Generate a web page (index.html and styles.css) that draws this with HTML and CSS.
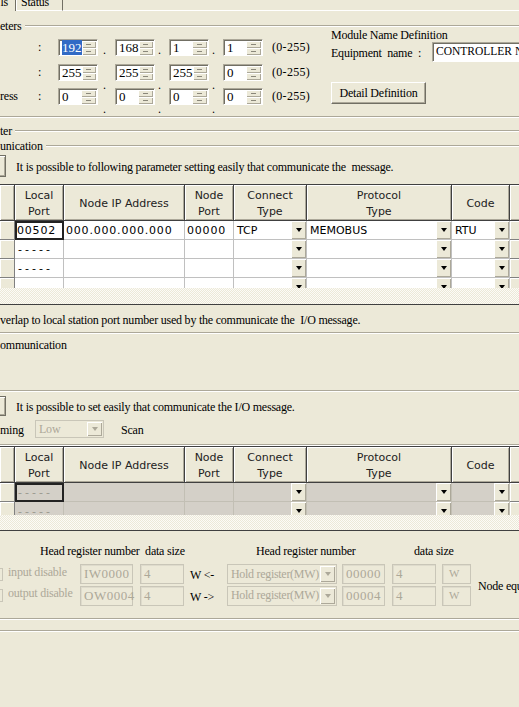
FILE: index.html
```html
<!DOCTYPE html>
<html lang="en">
<head>
    <meta charset="UTF-8">
    <meta name="viewport" content="width=device-width, initial-scale=1.0">
    <title>Ethernet Transmission Definition</title>
    <link rel="stylesheet" href="styles.css">
</head>
<body>
<div class="dialog">
    <div class="tabs">
        <div class="tab tab-current"><span>ls</span></div>
        <div class="tab tab-status"><span>Status</span></div>
        <div class="tab-rest"></div>
    </div>

    <div class="group-title"><span>eters</span><div class="etch"></div></div>
    <div class="param-group">
        <div class="ip-block">
            <div class="ip-row">
                <span class="ip-label"></span><span class="colon">:</span>
                <div class="spin"><span class="spin-value"><span class="selected">192</span></span><div class="spin-btns"><i class="up"></i><i class="down"></i></div></div>
                <span class="dot dot-mid dot-first">.</span>
                <div class="spin"><span class="spin-value">168</span><div class="spin-btns"><i class="up"></i><i class="down"></i></div></div>
                <span class="dot dot-mid">.</span>
                <div class="spin"><span class="spin-value">1</span><div class="spin-btns"><i class="up"></i><i class="down"></i></div></div>
                <span class="dot dot-mid">.</span>
                <div class="spin"><span class="spin-value">1</span><div class="spin-btns"><i class="up"></i><i class="down"></i></div></div>
                <span class="range">(0-255)</span>
            </div>
            <div class="ip-row row-mask">
                <span class="ip-label"></span><span class="colon">:</span>
                <div class="spin"><span class="spin-value">255</span><div class="spin-btns"><i class="up"></i><i class="down"></i></div></div>
                <span class="dot dot-first">.</span>
                <div class="spin"><span class="spin-value">255</span><div class="spin-btns"><i class="up"></i><i class="down"></i></div></div>
                <span class="dot">.</span>
                <div class="spin"><span class="spin-value">255</span><div class="spin-btns"><i class="up"></i><i class="down"></i></div></div>
                <span class="dot">.</span>
                <div class="spin"><span class="spin-value">0</span><div class="spin-btns"><i class="up"></i><i class="down"></i></div></div>
                <span class="range">(0-255)</span>
            </div>
            <div class="ip-row row-gateway">
                <span class="ip-label">ress</span><span class="colon">:</span>
                <div class="spin"><span class="spin-value">0</span><div class="spin-btns"><i class="up"></i><i class="down"></i></div></div>
                <span class="dot dot-first">.</span>
                <div class="spin"><span class="spin-value">0</span><div class="spin-btns"><i class="up"></i><i class="down"></i></div></div>
                <span class="dot">.</span>
                <div class="spin"><span class="spin-value">0</span><div class="spin-btns"><i class="up"></i><i class="down"></i></div></div>
                <span class="dot">.</span>
                <div class="spin"><span class="spin-value">0</span><div class="spin-btns"><i class="up"></i><i class="down"></i></div></div>
                <span class="range">(0-255)</span>
            </div>
        </div>
        <div class="module-block">
            <div class="module-title">Module Name Definition</div>
            <div class="equip-row"><span class="equip-label">Equipment&nbsp; name&nbsp; :</span><div class="text-box">CONTROLLER NAME</div></div>
            <button class="push-btn">Detail Definition</button>
        </div>
    </div>
    <div class="etch etch-line group-end"></div>

    <div class="section-title title-ter"><span>ter</span><div class="etch"></div></div>
    <div class="section-title title-comm"><span>unication</span><div class="etch"></div></div>
    <div class="easy-row easy-msg">
        <div class="stub-btn"></div>
        <span>It is possible to following parameter setting easily that communicate the&nbsp; message.</span>
    </div>

    <div class="grid-wrap grid-msg">
        <table class="grid">
            <colgroup><col class="c-row"><col class="c-local"><col class="c-ip"><col class="c-port"><col class="c-conn"><col class="c-proto"><col class="c-code"><col class="c-more"></colgroup>
            <thead>
                <tr><th></th><th>Local<br>Port</th><th>Node IP Address</th><th>Node<br>Port</th><th>Connect<br>Type</th><th>Protocol<br>Type</th><th>Code</th><th></th></tr>
            </thead>
            <tbody>
                <tr><td class="rh"></td><td class="num focus">00502</td><td class="num">000.000.000.000</td><td class="num">00000</td><td><div class="combo"><span>TCP</span><i class="drop"></i></div></td><td><div class="combo"><span>MEMOBUS</span><i class="drop"></i></div></td><td><div class="combo"><span>RTU</span><i class="drop"></i></div></td><td class="rh"></td></tr>
                <tr><td class="rh"></td><td class="dash">-----</td><td></td><td></td><td><div class="combo"><span></span><i class="drop"></i></div></td><td><div class="combo"><span></span><i class="drop"></i></div></td><td><div class="combo"><span></span><i class="drop"></i></div></td><td class="rh"></td></tr>
                <tr><td class="rh"></td><td class="dash">-----</td><td></td><td></td><td><div class="combo"><span></span><i class="drop"></i></div></td><td><div class="combo"><span></span><i class="drop"></i></div></td><td><div class="combo"><span></span><i class="drop"></i></div></td><td class="rh"></td></tr>
                <tr><td class="rh"></td><td class="dash">-----</td><td></td><td></td><td><div class="combo"><span></span><i class="drop"></i></div></td><td><div class="combo"><span></span><i class="drop"></i></div></td><td><div class="combo"><span></span><i class="drop"></i></div></td><td class="rh"></td></tr>
            </tbody>
        </table>
    </div>
    <div class="dither"></div>

    <div class="note">verlap to local station port number used by the communicate the&nbsp; I/O message.</div>
    <div class="etch etch-line note-end"></div>
    <div class="plain-title">ommunication</div>
    <div class="etch etch-line io-start"></div>
    <div class="easy-row easy-io">
        <div class="stub-btn"></div>
        <span>It is possible to set easily that communicate the I/O message.</span>
    </div>
    <div class="timing-row">
        <span class="timing-label">ming</span>
        <div class="combo-box disabled"><span>Low</span><i class="drop"></i></div>
        <span class="scan">Scan</span>
    </div>
    <div class="etch etch-line io-grid-start"></div>

    <div class="grid-wrap grid-io">
        <table class="grid grid-disabled">
            <colgroup><col class="c-row"><col class="c-local"><col class="c-ip"><col class="c-port"><col class="c-conn"><col class="c-proto"><col class="c-code"><col class="c-more"></colgroup>
            <thead>
                <tr><th></th><th>Local<br>Port</th><th>Node IP Address</th><th>Node<br>Port</th><th>Connect<br>Type</th><th>Protocol<br>Type</th><th>Code</th><th></th></tr>
            </thead>
            <tbody>
                <tr><td class="rh"></td><td class="dash focus">-----</td><td></td><td></td><td><div class="combo"><span></span><i class="drop"></i></div></td><td><div class="combo"><span></span><i class="drop"></i></div></td><td><div class="combo"><span></span><i class="drop"></i></div></td><td class="rh"></td></tr>
                <tr><td class="rh"></td><td class="dash">-----</td><td></td><td></td><td><div class="combo"><span></span><i class="drop"></i></div></td><td><div class="combo"><span></span><i class="drop"></i></div></td><td><div class="combo"><span></span><i class="drop"></i></div></td><td class="rh"></td></tr>
            </tbody>
        </table>
    </div>
    <div class="dither dither-io"></div>

    <div class="reg-heads">
        <span class="head-local">Head register number&nbsp; data size</span>
        <span class="head-node">Head register number</span>
        <span class="head-size">data size</span>
    </div>
    <div class="reg-grid">
        <div class="chk"></div>
        <span class="reg-label">input disable</span>
        <div class="field f-reg">IW0000</div>
        <div class="field f-size">4</div>
        <span class="dir">W &lt;-</span>
        <div class="combo-box disabled f-combo"><span>Hold register(MW)</span><i class="drop"></i></div>
        <div class="field f-node">00000</div>
        <div class="field f-size">4</div>
        <div class="field f-unit">W</div>
        <span class="node-equ">Node equ</span>

        <div class="chk"></div>
        <span class="reg-label">output disable</span>
        <div class="field f-reg">OW0004</div>
        <div class="field f-size">4</div>
        <span class="dir">W -&gt;</span>
        <div class="combo-box disabled f-combo"><span>Hold register(MW)</span><i class="drop"></i></div>
        <div class="field f-node">00004</div>
        <div class="field f-size">4</div>
        <div class="field f-unit">W</div>
    </div>
    <div class="etch etch-line reg-end"></div>
    <div class="etch etch-line last-line"></div>
</div>
</body>
</html>
```

FILE: styles.css
```css
body, html {
    margin: 0;
    padding: 0;
    background-color: #ECE9D8;
    font-family: 'Liberation Serif', serif;
    font-size: 12px;
    letter-spacing: -0.22px;
    color: #000;
}

.dialog {
    width: 519px;
    height: 707px;
    overflow: hidden;
}

/* tabs */
.tabs {
    display: flex;
    height: 11px;
}

.tab {
    height: 11px;
    box-sizing: border-box;
    line-height: 4px;
    font-size: 12px;
    overflow: hidden;
}

.tab-current {
    width: 16px;
    text-align: right;
    padding-right: 7px;
    border-right: 1px solid #716F64;
}

.tab-status {
    width: 47px;
    padding-left: 4px;
    border-left: 1px solid #fff;
    border-right: 1px solid #716F64;
    border-bottom: 1px solid #fff;
}

.tab-rest {
    flex: 1;
    border-bottom: 1px solid #fff;
}

/* etched lines */
.etch {
    flex: 1;
    height: 0;
    border-top: 1px solid #ACA899;
    border-bottom: 1px solid #fff;
}

.etch-line {
    flex: none;
}

.group-title, .section-title {
    display: flex;
    align-items: center;
    height: 12px;
    line-height: 12px;
}

.group-title {
    margin-top: 9px;
}

.group-title span, .section-title span {
    margin-right: 3px;
}

/* IP parameters */
.param-group {
    display: flex;
    margin-top: -3px;
}

.ip-block {
    flex: none;
    width: 331px;
    padding-top: 10px;
}

.ip-row {
    display: flex;
    align-items: center;
    height: 17px;
    white-space: nowrap;
}

.row-mask {
    margin-top: 8px;
}

.row-gateway {
    margin-top: 7px;
}

.ip-label {
    width: 38px;
}

.colon {
    width: 20px;
}

.spin {
    flex: none;
    display: flex;
    width: 40px;
    height: 17px;
    box-sizing: border-box;
    border: 1px solid;
    border-color: #ACA899 #fff #fff #ACA899;
    box-shadow: inset 1px 1px #716F64;
    background: #fff;
}

.spin-value {
    flex: 1;
    padding: 1px 0 0 3px;
    font-size: 13px;
    line-height: 14px;
    letter-spacing: 0;
}

.selected {
    background: #316AC5;
    color: #fff;
}

.spin-btns {
    width: 15px;
    display: flex;
    flex-direction: column;
    padding: 1px 1px 0 0;
}

.spin-btns i {
    flex: 1;
    background: #ECE9D8;
    box-shadow: inset 1px 1px #fff, inset -1px -1px #ACA899;
    display: flex;
    align-items: center;
    justify-content: center;
}

.spin-btns i::after {
    content: "";
    width: 5px;
    height: 1px;
    background: #8A877A;
}

.dot {
    flex: none;
    width: 14px;
    align-self: flex-end;
    line-height: 8px;
    padding-left: 3px;
    box-sizing: border-box;
    height: 0;
    overflow: visible;
}

.dot-first {
    width: 17px;
    padding-left: 5px;
}

.dot-mid {
    align-self: center;
    line-height: 8px;
    height: 4px;
}

.range {
    margin-left: 9px;
    font-size: 12px;
    letter-spacing: 0.3px;
}

.module-block {
    flex: none;
}

.module-title {
    line-height: 12px;
}

.equip-row {
    display: flex;
    align-items: center;
    margin-top: 1px;
    height: 20px;
}

.equip-label {
    width: 101px;
    padding-top: 3px;
}

.text-box {
    width: 150px;
    height: 20px;
    box-sizing: border-box;
    border: 1px solid;
    border-color: #ACA899 #fff #fff #ACA899;
    box-shadow: inset 1px 1px #716F64;
    background: #fff;
    padding: 2px 0 0 3px;
    font-size: 11.5px;
    letter-spacing: 0;
    white-space: nowrap;
    overflow: hidden;
}

.push-btn {
    display: block;
    margin-top: 20px;
    width: 95px;
    height: 22px;
    padding: 0;
    background: #ECE9D8;
    border: 1px solid;
    border-color: #fff #716F64 #716F64 #fff;
    box-shadow: inset -1px -1px #ACA899;
    font-family: 'Liberation Serif', serif;
    font-size: 12px;
    letter-spacing: -0.22px;
    color: #000;
}

.group-end {
    margin-top: 11px;
}

.title-ter {
    margin-top: 7px;
}

.title-comm {
    margin-top: 3px;
}

.easy-row {
    display: flex;
    align-items: center;
    white-space: nowrap;
}

.easy-msg {
    margin-top: 3px;
    height: 22px;
}

.easy-row span {
    margin-left: 10px;
    padding-top: 2px;
}

.stub-btn {
    flex: none;
    width: 6px;
    height: 100%;
    box-sizing: border-box;
    border: 1px solid #716F64;
    border-left: none;
    box-shadow: inset 0 1px #fff, inset -1px -1px #ACA899;
}

/* grids */
.grid-wrap {
    width: 519px;
    overflow: hidden;
}

.grid-msg {
    margin-top: 7px;
    height: 104px;
}

.grid-io {
    height: 69px;
}

.grid {
    width: 550px;
    table-layout: fixed;
    border-collapse: separate;
    border-spacing: 0;
    font-family: 'DejaVu Sans', sans-serif;
    font-size: 11px;
    letter-spacing: 0;
}

.c-row { width: 15px; }
.c-local { width: 49px; }
.c-ip { width: 121px; }
.c-port { width: 49px; }
.c-conn { width: 73px; }
.c-proto { width: 145px; }
.c-code { width: 58px; }
.c-more { width: 40px; }

.grid th {
    height: 31px;
    padding: 3px 0 0;
    font-weight: normal;
    line-height: 16px;
    background: #ECE9D8;
    border-top: 1px solid #404040;
    border-bottom: 1px solid #404040;
    border-right: 1px solid #404040;
    box-shadow: inset 1px 1px #fff, inset -1px -1px #ACA899;
    color: #222;
}

.grid td {
    height: 18px;
    padding: 0;
    background: #fff;
    border-right: 1px solid #C0C0C0;
    border-bottom: 1px solid #C0C0C0;
    white-space: nowrap;
    overflow: hidden;
}

.grid td.rh {
    background: #ECE9D8;
    border-right: 1px solid #808080;
    border-bottom: 1px solid #808080;
    box-shadow: inset 1px 1px #fff;
}

.grid td.num {
    padding-left: 2px;
    letter-spacing: 0.8px;
}

.grid td.dash {
    padding-left: 3px;
    letter-spacing: 3px;
}

.grid td.focus {
    outline: 2px solid #222;
    outline-offset: -2px;
}

.combo {
    display: flex;
    height: 18px;
    align-items: center;
}

.combo span {
    flex: 1;
    padding-left: 3px;
}

.drop {
    flex: none;
    width: 15px;
    height: 18px;
    box-sizing: border-box;
    background: #ECE9D8;
    box-shadow: inset 1px 1px #fff, inset -1px -1px #ACA899;
    display: flex;
    align-items: center;
    justify-content: center;
}

.drop::after {
    content: "";
    width: 0;
    height: 0;
    border-left: 3.5px solid transparent;
    border-right: 3.5px solid transparent;
    border-top: 4px solid #000;
}

.grid-disabled td {
    background: #D4D0C8;
    border-right-color: #C2BFB4;
    border-bottom-color: #C2BFB4;
}

.grid-disabled td.dash {
    color: #9A988E;
}

.dither {
    height: 16px;
    background: repeating-conic-gradient(#ECE9D8 0 25%, #FCFBF7 0 50%) 0 0 / 2px 2px;
    border-bottom: 1px solid #404040;
}

.dither-io {
    height: 15px;
}

.note {
    margin-top: 9px;
    line-height: 12px;
    white-space: nowrap;
}

.note-end {
    margin-top: 6px;
}

.plain-title {
    margin-top: 5px;
    line-height: 12px;
}

.io-start {
    margin-top: 39px;
}

.easy-io {
    margin-top: 4px;
    height: 20px;
}

.timing-row {
    display: flex;
    align-items: center;
    margin-top: 4px;
    height: 18px;
}

.timing-label {
    width: 35px;
    padding-top: 2px;
}

.combo-box {
    display: flex;
    align-items: center;
    width: 69px;
    height: 18px;
    box-sizing: border-box;
    border: 1px solid #C9C6B8;
    background: #ECE9D8;
    padding: 1px;
    font-size: 12px;
}

.combo-box span {
    flex: 1;
    padding-left: 2px;
    white-space: nowrap;
    overflow: hidden;
}

.combo-box .drop {
    height: 100%;
}

.disabled, .disabled span {
    color: #ACA899;
}

.combo-box.disabled .drop::after {
    border-top-color: #ACA899;
}

.scan {
    margin-left: 17px;
    padding-top: 2px;
}

.io-grid-start {
    margin-top: 6px;
}

/* register rows */
.reg-heads {
    display: flex;
    margin-top: 14px;
    line-height: 12px;
    white-space: nowrap;
}

.head-local {
    margin-left: 40px;
    width: 216px;
}

.head-node {
    width: 158px;
}

.reg-grid {
    display: grid;
    grid-template-columns: 8px 72px 60px 50px 37px 115px 50px 50px 36px 60px;
    grid-template-rows: 20px 21px;
    row-gap: 1px;
    align-items: center;
    margin-top: 7px;
    white-space: nowrap;
}

.chk {
    width: 13px;
    height: 13px;
    margin-left: -10px;
    box-sizing: border-box;
    border: 1px solid #C9C6B8;
}

.reg-label {
    color: #ACA899;
    align-self: start;
    padding-top: 1px;
}

.field {
    height: 20px;
    box-sizing: border-box;
    border: 1px solid #C9C6B8;
    box-shadow: inset 1px 1px #DEDBCC;
    color: #ACA899;
    font-size: 13px;
    line-height: 17px;
    padding-left: 3px;
    letter-spacing: 0.5px;
}

.f-reg { width: 53px; }
.f-size { width: 44px; }
.f-node { width: 43px; }
.f-unit {
    width: 29px;
    font-size: 11px;
    padding-left: 6px;
}

.f-combo {
    width: 110px;
    height: 20px;
    letter-spacing: -0.3px;
}

.dir {
    padding-top: 3px;
}

.node-equ {
    grid-column: 10;
    grid-row: 1 / span 2;
    padding-top: 2px;
}

.reg-end {
    margin-top: 12px;
}

.last-line {
    margin-top: 10px;
}
```
